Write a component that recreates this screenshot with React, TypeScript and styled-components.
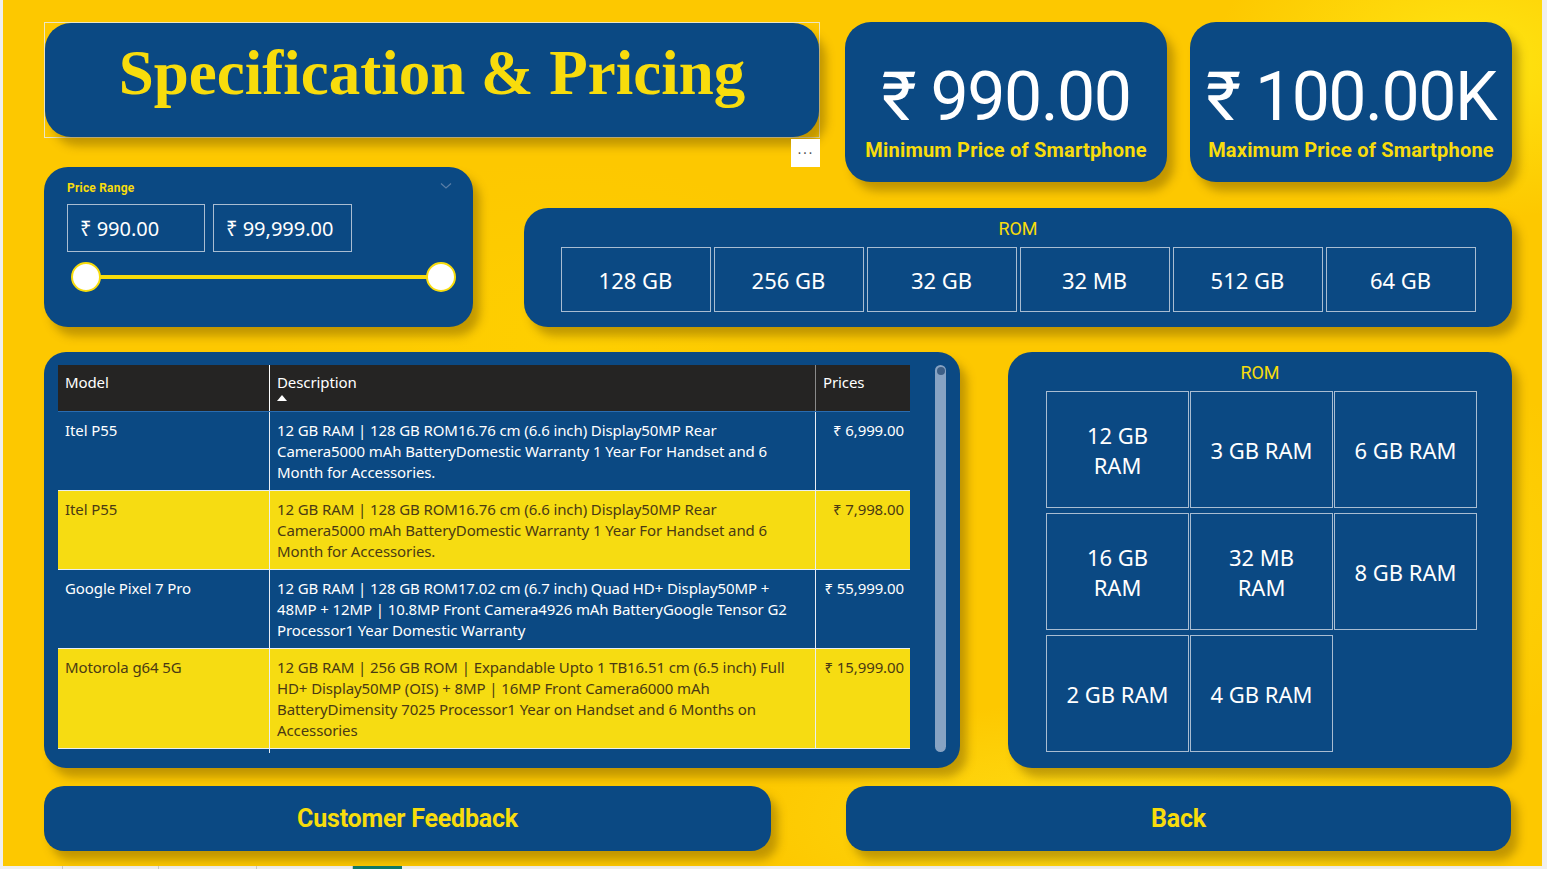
import React from 'react';
import styled, { createGlobalStyle } from 'styled-components';

const GlobalStyle = createGlobalStyle`
  html, body {
    margin: 0;
    padding: 0;
    background: #f0efee;
    overflow: hidden;
  }
`;

const BLUE = '#0b4983';
const YELLOW = '#f8dc0c';
const SHADOW = '7px 9px 10px rgba(120, 88, 0, 0.45)';

const Canvas = styled.div`
  margin-left: 3px;
  width: 1539px;
  height: 866px;
  box-sizing: border-box;
  padding: 22px 0 0 41px;
  background:
    radial-gradient(ellipse 260px 160px at 1470px 60px, rgba(255, 232, 20, 0.9), transparent),
    radial-gradient(ellipse 300px 200px at 1350px 560px, rgba(255, 226, 20, 0.55), transparent),
    radial-gradient(ellipse 380px 120px at 1120px 820px, rgba(255, 230, 30, 0.7), transparent),
    radial-gradient(ellipse 300px 180px at 560px 340px, rgba(255, 214, 0, 0.5), transparent),
    #fdc800;
  font-family: 'Noto Sans', 'Open Sans', sans-serif;
`;

const TopGrid = styled.div`
  display: grid;
  grid-template-columns: 429px 51px 296px 25px 322px 23px 322px;
  grid-template-rows: 115px 30px 15px 26px 119px;
  grid-template-areas:
    'title title title . min . max'
    '. . . . min . max'
    'price . . . min . max'
    'price . . . . . .'
    'price . rom rom rom rom rom';
`;

const TitleFrame = styled.div`
  grid-area: title;
  position: relative;
  border: 1px solid #ece6c4;
  margin: 0 0 -1px 0;
`;

const TitleBox = styled.div`
  height: 100%;
  box-sizing: border-box;
  background: ${BLUE};
  border-radius: 26px;
  box-shadow: ${SHADOW};
  display: flex;
  justify-content: center;
  padding-top: 19px;
  color: ${YELLOW};
  font-family: 'Liberation Serif', 'DejaVu Serif', serif;
  font-weight: 700;
  font-size: 63px;
  line-height: 1;
`;

const MoreButton = styled.div`
  position: absolute;
  right: -1px;
  top: calc(100% + 2px);
  width: 29px;
  height: 28px;
  background: #ffffff;
  color: #555;
  font-size: 14px;
  letter-spacing: 1px;
  display: flex;
  align-items: center;
  justify-content: center;
  font-family: 'DejaVu Sans', sans-serif;
`;

const StatCard = styled.div<{ $area: string }>`
  grid-area: ${(p) => p.$area};
  background: ${BLUE};
  border-radius: 26px;
  box-shadow: ${SHADOW};
  display: flex;
  flex-direction: column;
  align-items: center;
  padding-top: 38px;
  box-sizing: border-box;
`;

const StatValue = styled.div`
  color: #ffffff;
  font-family: Roboto, 'Noto Sans', sans-serif;
  font-size: 68px;
  line-height: 74px;
  letter-spacing: -1.5px;
`;

const StatLabel = styled.div`
  color: ${YELLOW};
  font-family: Roboto, 'Noto Sans', sans-serif;
  font-weight: 700;
  font-size: 20px;
  margin-top: 4px;
  letter-spacing: 0.2px;
`;

const PricePanel = styled.div`
  grid-area: price;
  position: relative;
  background: ${BLUE};
  border-radius: 24px;
  box-shadow: ${SHADOW};
  padding: 14px 23px 0 23px;
  box-sizing: border-box;
`;

const SmallLabel = styled.div`
  color: ${YELLOW};
  font-family: Roboto, 'Noto Sans', sans-serif;
  font-weight: 700;
  font-size: 12px;
  letter-spacing: 0.2px;
`;

const Chevron = styled.svg`
  position: absolute;
  right: 21px;
  top: 15px;
`;

const InputRow = styled.div`
  display: flex;
  gap: 8px;
  margin-top: 9px;
`;

const PriceInput = styled.div<{ $w: number }>`
  width: ${(p) => p.$w}px;
  height: 48px;
  box-sizing: border-box;
  border: 1.5px solid #a9bdd2;
  color: #ffffff;
  font-size: 20px;
  display: flex;
  align-items: center;
  padding-left: 12px;
`;

const SliderTrack = styled.div`
  position: relative;
  height: 30px;
  margin: 10px -6px 0 4px;
  display: flex;
  align-items: center;
`;

const SliderLine = styled.div`
  flex: 1;
  height: 4px;
  margin: 0 12px;
  background: ${YELLOW};
`;

const Handle = styled.div<{ $side: 'left' | 'right' }>`
  position: absolute;
  ${(p) => p.$side}: 0;
  top: 0;
  width: 26px;
  height: 26px;
  border-radius: 50%;
  background: #ffffff;
  border: 2px solid ${YELLOW};
`;

const RomPanel = styled.div`
  grid-area: rom;
  background: ${BLUE};
  border-radius: 24px;
  box-shadow: ${SHADOW};
  display: flex;
  flex-direction: column;
  align-items: center;
`;

const PanelTitle = styled.div`
  color: ${YELLOW};
  font-family: Roboto, 'Noto Sans', sans-serif;
  font-size: 18px;
  line-height: 20px;
  margin-top: 11px;
`;

const RomRow = styled.div`
  display: flex;
  gap: 3px;
  margin-top: 8px;
`;

const Tile = styled.div<{ $w: number; $h: number }>`
  width: ${(p) => p.$w}px;
  height: ${(p) => p.$h}px;
  box-sizing: border-box;
  border: 1.5px solid #a9bdd2;
  color: #ffffff;
  font-size: 22px;
  line-height: 30px;
  display: flex;
  align-items: center;
  justify-content: center;
  text-align: center;
  white-space: pre-line;
`;

const MiddleRow = styled.div`
  display: flex;
  gap: 48px;
  margin-top: 25px;
`;

const TablePanel = styled.div`
  width: 916px;
  height: 416px;
  box-sizing: border-box;
  background: ${BLUE};
  border-radius: 22px;
  box-shadow: ${SHADOW};
  padding: 13px 0 0 14px;
  display: flex;
  gap: 25px;
`;

const Table = styled.div`
  width: 852px;
  display: flex;
  flex-direction: column;
  font-size: 15px;
  line-height: 21px;
`;

const Row = styled.div<{ $kind: 'head' | 'blue' | 'yellow' }>`
  display: grid;
  grid-template-columns: 211px 546px 95px;
  background: ${(p) => (p.$kind === 'head' ? '#252423' : p.$kind === 'yellow' ? '#f6dc12' : BLUE)};
  color: ${(p) => (p.$kind === 'yellow' ? '#4a3a14' : '#ffffff')};
  border-bottom: 1px solid ${(p) => (p.$kind === 'head' ? '#2a6cb0' : '#e8eef4')};
`;

const Cell = styled.div<{ $right?: boolean; $divider?: string }>`
  padding: 8px 6px 7px 7px;
  white-space: nowrap;
  letter-spacing: -0.1px;
  text-align: ${(p) => (p.$right ? 'right' : 'left')};
  border-left: ${(p) => (p.$divider ? `1px solid ${p.$divider}` : 'none')};
`;

const HeadCell = styled(Cell)`
  height: 46px;
  box-sizing: border-box;
  padding-top: 7px;
  font-size: 15px;
  position: relative;
`;

const SortArrow = styled.div`
  position: absolute;
  left: 7px;
  top: 30px;
  width: 0;
  height: 0;
  border-left: 5px solid transparent;
  border-right: 5px solid transparent;
  border-bottom: 6px solid #ffffff;
`;

const TableTail = styled.div`
  height: 4px;
  margin-left: 211px;
  border-left: 1px solid #e8eef4;
`;

const Scrollbar = styled.div`
  position: relative;
  width: 11px;
  height: 387px;
  border-radius: 6px;
  background: #87a3c3;
`;

const ScrollKnob = styled.div`
  position: absolute;
  top: 2px;
  left: 1.5px;
  width: 8px;
  height: 8px;
  border-radius: 50%;
  background: #3d5f86;
`;

const RamPanel = styled.div`
  width: 504px;
  height: 416px;
  box-sizing: border-box;
  background: ${BLUE};
  border-radius: 24px;
  box-shadow: ${SHADOW};
  display: flex;
  flex-direction: column;
  align-items: center;
`;

const RamGrid = styled.div`
  display: grid;
  grid-template-columns: repeat(3, 143px);
  grid-auto-rows: 117px;
  column-gap: 1px;
  row-gap: 5px;
  margin-top: 8px;
  margin-left: 3px;
`;

const ButtonRow = styled.div`
  display: flex;
  gap: 75px;
  margin-top: 18px;
`;

const NavButton = styled.div<{ $w: number }>`
  width: ${(p) => p.$w}px;
  height: 65px;
  background: ${BLUE};
  border-radius: 20px;
  box-shadow: ${SHADOW};
  color: ${YELLOW};
  font-family: Roboto, 'Noto Sans', sans-serif;
  font-weight: 700;
  font-size: 25px;
  letter-spacing: -0.2px;
  display: flex;
  align-items: center;
  justify-content: center;
`;

const TabStrip = styled.div`
  display: flex;
  height: 3px;
  padding-left: 62px;
`;

const Tab = styled.div<{ $w: number; $active?: boolean }>`
  width: ${(p) => p.$w}px;
  border-left: 1px solid #c8c6c4;
  background: ${(p) => (p.$active ? '#117865' : 'transparent')};
`;

const romOptions = ['128 GB', '256 GB', '32 GB', '32 MB', '512 GB', '64 GB'];
const ramOptions = ['12 GB\nRAM', '3 GB RAM', '6 GB RAM', '16 GB\nRAM', '32 MB\nRAM', '8 GB RAM', '2 GB RAM', '4 GB RAM'];

const phones = [
  {
    model: 'Itel P55',
    kind: 'blue' as const,
    lines: [
      '12 GB RAM | 128 GB ROM16.76 cm (6.6 inch) Display50MP Rear',
      'Camera5000 mAh BatteryDomestic Warranty 1 Year For Handset and 6',
      'Month for Accessories.',
    ],
    price: '₹ 6,999.00',
  },
  {
    model: 'Itel P55',
    kind: 'yellow' as const,
    lines: [
      '12 GB RAM | 128 GB ROM16.76 cm (6.6 inch) Display50MP Rear',
      'Camera5000 mAh BatteryDomestic Warranty 1 Year For Handset and 6',
      'Month for Accessories.',
    ],
    price: '₹ 7,998.00',
  },
  {
    model: 'Google Pixel 7 Pro',
    kind: 'blue' as const,
    lines: [
      '12 GB RAM | 128 GB ROM17.02 cm (6.7 inch) Quad HD+ Display50MP +',
      '48MP + 12MP | 10.8MP Front Camera4926 mAh BatteryGoogle Tensor G2',
      'Processor1 Year Domestic Warranty',
    ],
    price: '₹ 55,999.00',
  },
  {
    model: 'Motorola g64 5G',
    kind: 'yellow' as const,
    lines: [
      '12 GB RAM | 256 GB ROM | Expandable Upto 1 TB16.51 cm (6.5 inch) Full',
      'HD+ Display50MP (OIS) + 8MP | 16MP Front Camera6000 mAh',
      'BatteryDimensity 7025 Processor1 Year on Handset and 6 Months on',
      'Accessories',
    ],
    price: '₹ 15,999.00',
  },
];

const App = () => {
  return (
    <>
      <GlobalStyle />
      <Canvas>
        <TopGrid>
          <TitleFrame>
            <TitleBox>Specification &amp; Pricing</TitleBox>
            <MoreButton>···</MoreButton>
          </TitleFrame>

          <StatCard $area="min">
            <StatValue>₹ 990.00</StatValue>
            <StatLabel>Minimum Price of Smartphone</StatLabel>
          </StatCard>
          <StatCard $area="max">
            <StatValue>₹ 100.00K</StatValue>
            <StatLabel>Maximum Price of Smartphone</StatLabel>
          </StatCard>

          <PricePanel>
            <SmallLabel>Price Range</SmallLabel>
            <Chevron width="12" height="8" viewBox="0 0 12 8">
              <path d="M1 1.5 L6 6 L11 1.5" fill="none" stroke="#5a7ea6" strokeWidth="1.2" />
            </Chevron>
            <InputRow>
              <PriceInput $w={138}>₹ 990.00</PriceInput>
              <PriceInput $w={139}>₹ 99,999.00</PriceInput>
            </InputRow>
            <SliderTrack>
              <Handle $side="left" />
              <SliderLine />
              <Handle $side="right" />
            </SliderTrack>
          </PricePanel>

          <RomPanel>
            <PanelTitle>ROM</PanelTitle>
            <RomRow>
              {romOptions.map((o) => (
                <Tile key={o} $w={150} $h={65}>
                  {o}
                </Tile>
              ))}
            </RomRow>
          </RomPanel>
        </TopGrid>

        <MiddleRow>
          <TablePanel>
            <Table>
              <Row $kind="head">
                <HeadCell>Model</HeadCell>
                <HeadCell $divider="#ffffff">
                  Description
                  <SortArrow />
                </HeadCell>
                <HeadCell $divider="#8a8a8a">Prices</HeadCell>
              </Row>
              {phones.map((p, i) => (
                <Row key={i} $kind={p.kind}>
                  <Cell>{p.model}</Cell>
                  <Cell $divider="#e8eef4">
                    {p.lines.map((l) => (
                      <div key={l}>{l}</div>
                    ))}
                  </Cell>
                  <Cell $divider="#e8eef4" $right>
                    {p.price}
                  </Cell>
                </Row>
              ))}
              <TableTail />
            </Table>
            <Scrollbar>
              <ScrollKnob />
            </Scrollbar>
          </TablePanel>

          <RamPanel>
            <PanelTitle>ROM</PanelTitle>
            <RamGrid>
              {ramOptions.map((o) => (
                <Tile key={o} $w={143} $h={117}>
                  {o}
                </Tile>
              ))}
            </RamGrid>
          </RamPanel>
        </MiddleRow>

        <ButtonRow>
          <NavButton $w={727}>Customer Feedback</NavButton>
          <NavButton $w={665}>Back</NavButton>
        </ButtonRow>
      </Canvas>
      <TabStrip>
        <Tab $w={95} />
        <Tab $w={97} />
        <Tab $w={95} />
        <Tab $w={49} $active />
      </TabStrip>
    </>
  );
};

export default App;
